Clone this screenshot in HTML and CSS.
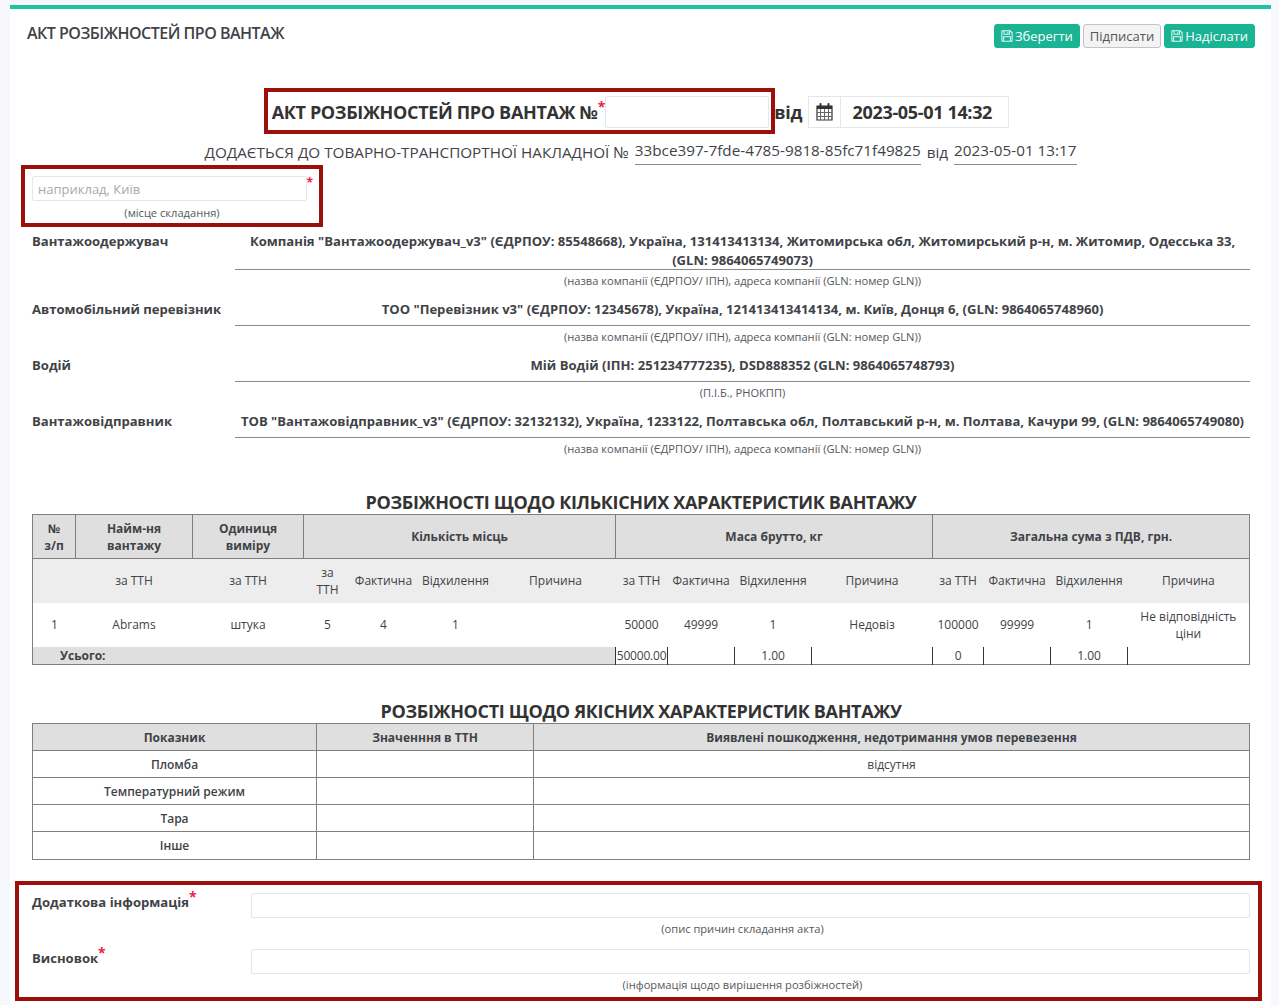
FILE: index.html
```html
<!DOCTYPE html>
<html lang="uk">
<head>
    <meta charset="UTF-8">
    <title>Акт розбіжностей про вантаж</title>
    <link rel="stylesheet" href="styles.css">
</head>
<body>
<div class="ibox">
    <div class="ibox-title">
        <h5>АКТ РОЗБІЖНОСТЕЙ ПРО ВАНТАЖ</h5>
        <div class="tools">
            <button class="btn btn-primary">
                <svg class="ico-save" viewBox="0 0 14 14"><path d="M1.500 1h9.200l2.300 2.300v9.200a.5.5 0 0 1-.5.5h-11a.5.5 0 0 1-.5-.5v-11a.5.5 0 0 1 .5-.5z M3.500 1v4h6.500V1 M8 2v2 M3 13V8h8v5"/></svg>
                Зберегти
            </button>
            <button class="btn btn-white">Підписати</button>
            <button class="btn btn-primary">
                <svg class="ico-save" viewBox="0 0 14 14"><path d="M1.500 1h9.200l2.300 2.300v9.200a.5.5 0 0 1-.5.5h-11a.5.5 0 0 1-.5-.5v-11a.5.5 0 0 1 .5-.5z M3.500 1v4h6.500V1 M8 2v2 M3 13V8h8v5"/></svg>
                Надіслати
            </button>
        </div>
    </div>

    <div class="content">
        <div class="doc-head">
            <div class="doc-number">
                <span class="doc-title">АКТ РОЗБІЖНОСТЕЙ ПРО ВАНТАЖ №<sup class="req">*</sup></span>
                <input class="form-control number-input" type="text">
                <div class="mark mark-number"></div>
            </div>
            <span class="doc-title from">від</span>
            <div class="date-group">
                <span class="date-addon">
                    <svg class="ico-cal" viewBox="0 0 17 18">
                        <path class="ico-cal-body" d="M1 3h15v14H1z"/>
                        <path class="ico-cal-band" d="M1 3h15v3H1z"/>
                        <path class="ico-cal-grid" d="M1 9.500h15 M1 13.500h15 M4.500 6v11 M8.500 6v11 M12.500 6v11"/>
                        <path class="ico-cal-pin" d="M4.500 1v3 M12.500 1v3"/>
                    </svg>
                </span>
                <span class="date-value">2023-05-01 14:32</span>
            </div>
        </div>

        <div class="doc-sub">
            ДОДАЄТЬСЯ ДО ТОВАРНО-ТРАНСПОРТНОЇ НАКЛАДНОЇ №
            <span class="filled">33bce397-7fde-4785-9818-85fc71f49825</span>
            від
            <span class="filled">2023-05-01 13:17</span>
        </div>

        <div class="place">
            <div class="place-inner">
                <input class="form-control place-input" type="text" placeholder="наприклад, Київ">
                <span class="req place-req">*</span>
                <div class="caption">(місце складання)</div>
            </div>
            <div class="mark mark-place"></div>
        </div>

        <div class="party">
            <div class="party-label">Вантажоодержувач</div>
            <div class="party-body">
                <div class="party-value">Компанія "Вантажоодержувач_v3" (ЄДРПОУ: 85548668), Україна, 131413413134, Житомирська обл, Житомирський р-н, м. Житомир, Одесська 33, (GLN: 9864065749073)</div>
                <div class="caption">(назва компанії (ЄДРПОУ/ ІПН), адреса компанії (GLN: номер GLN))</div>
            </div>
        </div>
        <div class="party">
            <div class="party-label">Автомобільний перевізник</div>
            <div class="party-body">
                <div class="party-value">ТОО "Перевізник v3" (ЄДРПОУ: 12345678), Україна, 121413413414134, м. Київ, Донця 6, (GLN: 9864065748960)</div>
                <div class="caption">(назва компанії (ЄДРПОУ/ ІПН), адреса компанії (GLN: номер GLN))</div>
            </div>
        </div>
        <div class="party">
            <div class="party-label">Водій</div>
            <div class="party-body">
                <div class="party-value">Мій Водій (ІПН: 251234777235), DSD888352 (GLN: 9864065748793)</div>
                <div class="caption">(П.І.Б., РНОКПП)</div>
            </div>
        </div>
        <div class="party">
            <div class="party-label">Вантажовідправник</div>
            <div class="party-body">
                <div class="party-value">ТОВ "Вантажовідправник_v3" (ЄДРПОУ: 32132132), Україна, 1233122, Полтавська обл, Полтавський р-н, м. Полтава, Качури 99, (GLN: 9864065749080)</div>
                <div class="caption">(назва компанії (ЄДРПОУ/ ІПН), адреса компанії (GLN: номер GLN))</div>
            </div>
        </div>

        <h3 class="section-title first">РОЗБІЖНОСТІ ЩОДО КІЛЬКІСНИХ ХАРАКТЕРИСТИК ВАНТАЖУ</h3>
        <table class="grid qty">
            <colgroup>
                <col class="c43"><col class="c117"><col class="c111">
                <col class="c48"><col class="c64"><col class="c80"><col class="c120">
                <col class="c52"><col class="c67"><col class="c77"><col class="c121">
                <col class="c51"><col class="c67"><col class="c77"><col class="c122">
            </colgroup>
            <tr class="head">
                <th>№<br>з/п</th>
                <th>Найм-ня<br>вантажу</th>
                <th>Одиниця<br>виміру</th>
                <th colspan="4">Кількість місць</th>
                <th colspan="4">Маса брутто, кг</th>
                <th colspan="4">Загальна сума з ПДВ, грн.</th>
            </tr>
            <tr class="sub">
                <td></td><td>за ТТН</td><td>за ТТН</td>
                <td>за<br>ТТН</td><td>Фактична</td><td>Відхилення</td><td>Причина</td>
                <td>за ТТН</td><td>Фактична</td><td>Відхилення</td><td>Причина</td>
                <td>за ТТН</td><td>Фактична</td><td>Відхилення</td><td>Причина</td>
            </tr>
            <tr class="row">
                <td class="num">1</td><td>Abrams</td><td>штука</td>
                <td>5</td><td>4</td><td>1</td><td></td>
                <td>50000</td><td>49999</td><td>1</td><td>Недовіз</td>
                <td>100000</td><td>99999</td><td>1</td><td>Не відповідність ціни</td>
            </tr>
            <tr class="total">
                <td class="total-label" colspan="7">Усього:</td>
                <td class="sum tight">50000.00</td><td class="sum"></td><td class="sum">1.00</td><td class="sum"></td>
                <td class="sum">0</td><td class="sum"></td><td class="sum">1.00</td><td class="sum"></td>
            </tr>
        </table>

        <h3 class="section-title second">РОЗБІЖНОСТІ ЩОДО ЯКІСНИХ ХАРАКТЕРИСТИК ВАНТАЖУ</h3>
        <table class="grid quality">
            <colgroup>
                <col class="c284"><col class="c217"><col class="c716">
            </colgroup>
            <tr class="head">
                <th>Показник</th><th>Значенння в ТТН</th><th>Виявлені пошкодження, недотримання умов перевезення</th>
            </tr>
            <tr><td class="metric">Пломба</td><td></td><td>відсутня</td></tr>
            <tr><td class="metric">Температурний режим</td><td></td><td></td></tr>
            <tr><td class="metric">Тара</td><td></td><td></td></tr>
            <tr class="last"><td class="metric">Інше</td><td></td><td></td></tr>
        </table>

        <div class="extra">
            <div class="mark mark-extra"></div>
            <div class="extra-row">
                <div class="extra-label">Додаткова інформація<sup class="req">*</sup></div>
                <div class="extra-body">
                    <input class="form-control extra-input" type="text">
                    <div class="caption">(опис причин складання акта)</div>
                </div>
            </div>
            <div class="extra-row">
                <div class="extra-label">Висновок<sup class="req">*</sup></div>
                <div class="extra-body">
                    <input class="form-control extra-input" type="text">
                    <div class="caption">(інформація щодо вирішення розбіжностей)</div>
                </div>
            </div>
        </div>
    </div>
</div>
</body>
</html>
```

FILE: styles.css
```css
*{
    box-sizing: border-box;
}
html,body{
    margin:0;
    padding:0;
    height:1005px;
    overflow:hidden;
}
body{
    background-color:#f7f8fb;
    padding:5px 8px 0 10px;
    font-family:"Open Sans","Liberation Sans",sans-serif;
    font-size:13px;
    color:#3f4347;
}
.ibox{
    background-color:#fff;
    border-top:4px solid #1fc2a3;
    height:1000px;
}
.ibox-title{
    display:flex;
    justify-content:space-between;
    padding:14px 16px 0 17px;
    height:50px;
}
.ibox-title h5{
    margin:0;
    font-size:16px;
    font-weight:600;
    line-height:20px;
    letter-spacing:-0.5px;
    color:#3f4347;
}
.tools{
    display:flex;
    gap:3px;
    height:24px;
    margin-top:1px;
}
.btn{
    font-family:inherit;
    font-size:13px;
    line-height:18px;
    padding:2px 6px;
    border-radius:3px;
    border:1px solid #1ab394;
    background-color:#1ab394;
    color:#fff;
    display:flex;
    align-items:center;
    gap:2px;
}
.btn-white{
    background-color:#f3f3f3;
    border-color:#c4c4c4;
    color:#555;
}
.ico-save{
    width:12px;
    height:12px;
    fill:none;
    stroke:#e4f7f3;
    stroke-width:1.2;
}
.content{
    padding:0 21px 0 22px;
}
.req{
    color:#ed1c4b;
    font-size:14px;
    font-weight:700;
    line-height:0;
}
.caption{
    font-size:11.12px;
    line-height:16px;
    text-align:center;
    color:#54585c;
}
.form-control{
    display:block;
    border:1px solid #e5e6e7;
    border-radius:2px;
    background:#fff;
    font-family:inherit;
    outline:none;
}
.mark{
    position:absolute;
    border:4px solid #9c0f0a;
    pointer-events:none;
}

/* шапка документа */
.doc-head{
    display:flex;
    justify-content:center;
    align-items:center;
    height:32px;
    margin-top:37px;
    padding-right:1px;
}
.doc-number{
    position:relative;
    display:flex;
    align-items:center;
}
.doc-title{
    font-size:18px;
    font-weight:700;
    color:#333;
    letter-spacing:-0.34px;
    white-space:nowrap;
}
.doc-title .req{
    letter-spacing:0;
}
.number-input{
    width:164px;
    height:32px;
}
.mark-number{
    left:-8px;
    right:-6px;
    top:-8px;
    bottom:-6px;
}
.from{
    margin-left:5px;
    width:34px;
}
.date-group{
    display:flex;
    width:201px;
    height:32px;
    border:1px solid #e5e6e7;
}
.date-addon{
    width:32px;
    border-right:1px solid #e5e6e7;
    display:flex;
    align-items:center;
    justify-content:center;
}
.ico-cal{
    width:17px;
    height:18px;
}
.ico-cal-body{
    fill:#fff;
    stroke:#333;
    stroke-width:1.2;
}
.ico-cal-band{
    fill:#333;
}
.ico-cal-grid{
    fill:none;
    stroke:#666;
    stroke-width:1;
}
.ico-cal-pin{
    fill:none;
    stroke:#333;
    stroke-width:2;
    stroke-linecap:round;
}
.date-value{
    flex:1;
    text-align:center;
    font-size:18px;
    font-weight:700;
    color:#333;
    line-height:30px;
    padding-right:5px;
    letter-spacing:-0.34px;
}
.doc-sub{
    text-align:center;
    font-size:15.25px;
    line-height:24px;
    height:24px;
    margin-top:12px;
    padding-left:1px;
    color:#3f4347;
    white-space:nowrap;
}
.filled{
    display:inline-block;
    border-bottom:1px solid #8a8a8a;
    height:25px;
    line-height:20px;
    margin:0 2px;
    vertical-align:2px;
}

/* місце складання */
.place{
    position:relative;
    width:275px;
}
.place-inner{
    position:relative;
    padding-top:12px;
}
.place-input{
    width:275px;
    height:25px;
    padding:0 5px;
    font-size:13px;
}
.place-input::placeholder{
    color:#a9a9a9;
}
.place-req{
    position:absolute;
    right:-6px;
    top:19px;
    font-size:12px;
}
.place-inner .caption{
    margin-top:4px;
    padding-left:5px;
}
.mark-place{
    left:-11px;
    right:-16px;
    top:1px;
    bottom:-6px;
}

/* сторони */
.party{
    display:flex;
    font-size:13.08px;
    margin-top:11px;
}
.party + .party{
    margin-top:8px;
}
.party-label{
    width:203px;
    font-weight:700;
    line-height:18.5px;
    color:#3f4347;
    flex:none;
}
.party-body{
    flex:1;
}
.party-value{
    min-height:26px;
    border-bottom:1px solid #8a8a8a;
    text-align:center;
    font-weight:700;
    line-height:18.5px;
    color:#3f4347;
}
.party .caption{
    line-height:22px;
}

/* таблиці */
.section-title{
    margin:0;
    text-align:center;
    font-size:18px;
    font-weight:700;
    line-height:24px;
    color:#333;
    letter-spacing:-0.34px;
}
.section-title.first{
    margin-top:30px;
}
.section-title.second{
    margin-top:34px;
}
.grid{
    width:1217px;
    border-collapse:collapse;
    table-layout:fixed;
    font-size:12px;
    text-align:center;
    border:1px solid #7f7f7f;
}
.grid .head th{
    background-color:#dfdfdf;
    border:1px solid #7f7f7f;
    font-weight:700;
    padding:0;
    color:#3f4347;
    line-height:17px;
}
.grid td{
    padding:0;
    line-height:17px;
}
.c43{width:43px;}
.c117{width:117px;}
.c111{width:111px;}
.c48{width:48px;}
.c64{width:64px;}
.c80{width:80px;}
.c120{width:120px;}
.c52{width:52px;}
.c67{width:67px;}
.c77{width:77px;}
.c121{width:121px;}
.c51{width:51px;}
.c122{width:122px;}
.c284{width:284px;}
.c217{width:217px;}
.c716{width:716px;}
.qty .head{
    height:44px;
}
.qty .sub{
    height:44px;
    background-color:#ededed;
}
.qty .row{
    height:44px;
}
.qty .total{
    height:18px;
}
.qty .num{
    text-align:left;
    padding-left:18px;
}
.qty .total-label{
    background-color:#dfdfdf;
    font-weight:700;
    text-align:left;
    padding-left:27px;
}
.sum{
    border-left:1px solid #333;
}
.tight{
    letter-spacing:-0.2px;
}
.quality tr{
    height:27px;
}
.quality tr.last{
    height:28px;
}
.quality td{
    border:1px solid #7f7f7f;
}
.quality .metric{
    font-weight:600;
}

/* додаткова інформація */
.extra{
    position:relative;
    margin-top:33px;
}
.mark-extra{
    left:-17px;
    right:-12px;
    top:-12px;
    height:120px;
}
.extra-row{
    display:flex;
    height:56px;
}
.extra-label{
    width:203px;
    flex:none;
    font-size:13.08px;
    font-weight:700;
    line-height:18px;
    color:#3f4347;
}
.extra-body{
    flex:1;
}
.extra-input{
    width:calc(100% - 16px);
    margin-left:16px;
    height:25px;
}
.extra-body .caption{
    line-height:22px;
}
```
